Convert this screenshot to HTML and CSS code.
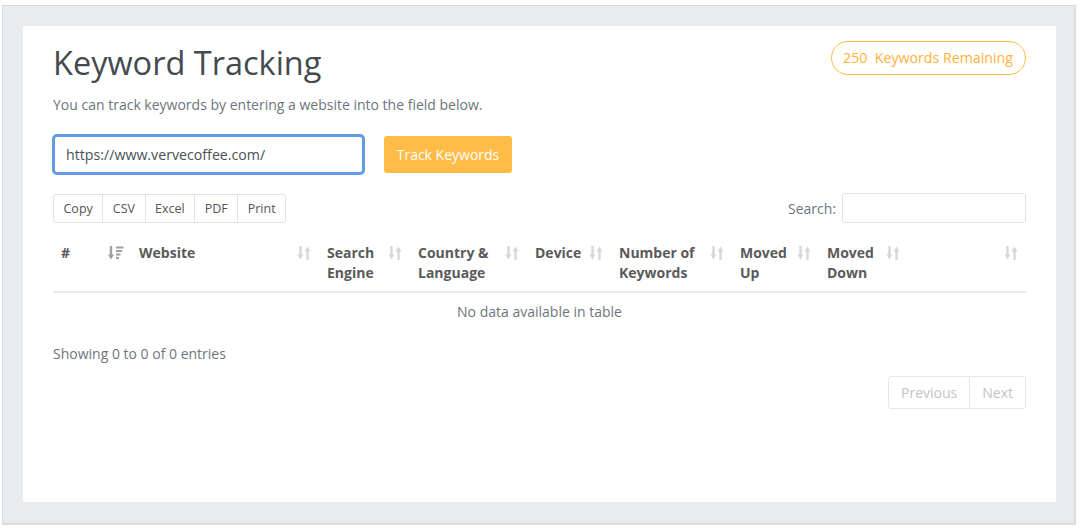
FILE: index.html
```html
<!DOCTYPE html>
<html lang="en">
<head>
<meta charset="utf-8">
<title>Keyword Tracking</title>
<link rel="stylesheet" href="styles.css">
</head>
<body>
<div class="frame">
  <div class="card">
    <div class="head">
      <div class="head-text">
        <h1 class="title">Keyword Tracking</h1>
        <p class="subtitle">You can track keywords by entering a website into the field below.</p>
      </div>
      <div class="badge">250&nbsp; Keywords Remaining</div>
    </div>

    <div class="form-row">
      <input class="url-input" type="text" value="https://www.vervecoffee.com/">
      <button class="track-btn">Track Keywords</button>
    </div>

    <div class="toolbar">
      <div class="btn-group">
        <span class="tb-btn">Copy</span><span class="tb-btn">CSV</span><span class="tb-btn">Excel</span><span class="tb-btn">PDF</span><span class="tb-btn">Print</span>
      </div>
      <label class="search">Search: <span class="search-input"></span></label>
    </div>

    <table class="grid">
      <colgroup>
        <col class="c1"><col class="c2"><col class="c3"><col class="c4"><col class="c5"><col class="c6"><col class="c7"><col class="c8"><col class="c9">
      </colgroup>
      <thead>
        <tr>
          <th><div class="th-in"><span>#</span>
            <svg class="sort active" viewBox="0 0 16 14"><path d="M3 0v10" stroke="#a0a0a0" stroke-width="2.4"/><path d="M0 8.5l3 5 3-5z" fill="#a0a0a0"/><rect x="8" y="0.5" width="7.5" height="2" fill="#a0a0a0"/><rect x="8" y="4" width="6" height="2" fill="#a0a0a0"/><rect x="8" y="7.5" width="4.5" height="2" fill="#a0a0a0"/><rect x="8" y="11" width="3" height="2" fill="#a0a0a0"/></svg></div></th>
          <th><div class="th-in"><span>Website</span><svg class="sort" viewBox="0 0 14 14"><path d="M3.5 0v10" stroke="#d6d6d6" stroke-width="2.3"/><path d="M0.6 8.5l2.9 5 2.9-5z" fill="#d6d6d6"/><path d="M10.5 14V4" stroke="#d6d6d6" stroke-width="2.3"/><path d="M7.6 5.5l2.9-5 2.9 5z" fill="#d6d6d6"/></svg></div></th>
          <th><div class="th-in"><span>Search<br>Engine</span><svg class="sort" viewBox="0 0 14 14"><path d="M3.5 0v10" stroke="#d6d6d6" stroke-width="2.3"/><path d="M0.6 8.5l2.9 5 2.9-5z" fill="#d6d6d6"/><path d="M10.5 14V4" stroke="#d6d6d6" stroke-width="2.3"/><path d="M7.6 5.5l2.9-5 2.9 5z" fill="#d6d6d6"/></svg></div></th>
          <th><div class="th-in"><span>Country &amp;<br>Language</span><svg class="sort" viewBox="0 0 14 14"><path d="M3.5 0v10" stroke="#d6d6d6" stroke-width="2.3"/><path d="M0.6 8.5l2.9 5 2.9-5z" fill="#d6d6d6"/><path d="M10.5 14V4" stroke="#d6d6d6" stroke-width="2.3"/><path d="M7.6 5.5l2.9-5 2.9 5z" fill="#d6d6d6"/></svg></div></th>
          <th><div class="th-in"><span>Device</span><svg class="sort" viewBox="0 0 14 14"><path d="M3.5 0v10" stroke="#d6d6d6" stroke-width="2.3"/><path d="M0.6 8.5l2.9 5 2.9-5z" fill="#d6d6d6"/><path d="M10.5 14V4" stroke="#d6d6d6" stroke-width="2.3"/><path d="M7.6 5.5l2.9-5 2.9 5z" fill="#d6d6d6"/></svg></div></th>
          <th><div class="th-in"><span>Number of<br>Keywords</span><svg class="sort" viewBox="0 0 14 14"><path d="M3.5 0v10" stroke="#d6d6d6" stroke-width="2.3"/><path d="M0.6 8.5l2.9 5 2.9-5z" fill="#d6d6d6"/><path d="M10.5 14V4" stroke="#d6d6d6" stroke-width="2.3"/><path d="M7.6 5.5l2.9-5 2.9 5z" fill="#d6d6d6"/></svg></div></th>
          <th><div class="th-in"><span>Moved<br>Up</span><svg class="sort" viewBox="0 0 14 14"><path d="M3.5 0v10" stroke="#d6d6d6" stroke-width="2.3"/><path d="M0.6 8.5l2.9 5 2.9-5z" fill="#d6d6d6"/><path d="M10.5 14V4" stroke="#d6d6d6" stroke-width="2.3"/><path d="M7.6 5.5l2.9-5 2.9 5z" fill="#d6d6d6"/></svg></div></th>
          <th><div class="th-in"><span>Moved<br>Down</span><svg class="sort" viewBox="0 0 14 14"><path d="M3.5 0v10" stroke="#d6d6d6" stroke-width="2.3"/><path d="M0.6 8.5l2.9 5 2.9-5z" fill="#d6d6d6"/><path d="M10.5 14V4" stroke="#d6d6d6" stroke-width="2.3"/><path d="M7.6 5.5l2.9-5 2.9 5z" fill="#d6d6d6"/></svg></div></th>
          <th><div class="th-in"><span></span><svg class="sort" viewBox="0 0 14 14"><path d="M3.5 0v10" stroke="#d6d6d6" stroke-width="2.3"/><path d="M0.6 8.5l2.9 5 2.9-5z" fill="#d6d6d6"/><path d="M10.5 14V4" stroke="#d6d6d6" stroke-width="2.3"/><path d="M7.6 5.5l2.9-5 2.9 5z" fill="#d6d6d6"/></svg></div></th>
        </tr>
      </thead>
      <tbody>
        <tr><td colspan="9" class="empty">No data available in table</td></tr>
      </tbody>
    </table>

    <div class="info">Showing 0 to 0 of 0 entries</div>

    <div class="pager">
      <span class="pg">Previous</span><span class="pg">Next</span>
    </div>
  </div>
</div>
</body>
</html>
```
FILE: styles.css
```css
* { box-sizing: border-box; }
html, body { margin: 0; padding: 0; background: #ffffff; }
body {
  font-family: "Open Sans", "Noto Sans", sans-serif;
  color: #555;
}
.frame {
  margin: 5px 0 0 2px;
  width: 1074px;
  height: 520px;
  background: #e9ecef;
  border-style: solid;
  border-color: #dcdcdc;
  border-width: 1px 2px 2px 1px;
  padding: 20px 18px 20px 20px;
}
.card {
  background: #fff;
  height: 476px;
  padding: 15px 30px 0 30px;
}
.head {
  display: flex;
  justify-content: space-between;
  align-items: flex-start;
}
.title {
  margin: 2px 0 0 0;
  font-size: 32.5px;
  font-weight: 400;
  line-height: 40px;
  color: #454a50;
}
.subtitle {
  margin: 12px 0 0 0;
  font-size: 14px;
  line-height: 20px;
  color: #6c757d;
}
.badge {
  border: 1px solid #ffbc47;
  color: #ffb13b;
  border-radius: 17px;
  height: 34px;
  line-height: 32px;
  padding: 0 12px 0 11.5px;
  font-size: 14.2px;
}
.form-row {
  display: flex;
  align-items: center;
  margin-top: 19px;
  margin-left: -1px;
}
.url-input {
  width: 313px;
  height: 41px;
  border: 3px solid #609ce6;
  border-radius: 5px;
  padding: 0 11px;
  font-family: inherit;
  font-size: 14.2px;
  color: #495057;
  outline: none;
}
.track-btn {
  margin-left: 19px;
  width: 128px;
  height: 37px;
  border: 0;
  border-radius: 3px;
  background: #ffbc47;
  color: #fff;
  font-family: inherit;
  font-size: 14px;
}
.toolbar {
  display: flex;
  justify-content: space-between;
  align-items: center;
  margin-top: 18px;
}
.btn-group {
  display: flex;
  border: 1px solid #e2e2e2;
  border-radius: 3px;
  height: 29px;
}
.tb-btn {
  font-size: 12.5px;
  color: #555;
  line-height: 27px;
  padding: 0 9.5px;
  border-left: 1px solid #e2e2e2;
}
.tb-btn:first-child { border-left: 0; }
.search {
  display: flex;
  align-items: center;
  font-size: 14px;
  color: #6c757d;
}
.search-input {
  margin-left: 6px;
  width: 184px;
  height: 30px;
  border: 1px solid #e2e2e2;
  border-radius: 3px;
}
.grid {
  width: 973px;
  margin-top: 13px;
  border-collapse: collapse;
  table-layout: fixed;
}
.c1 { width: 78px; }
.c2 { width: 188px; }
.c3 { width: 91px; }
.c4 { width: 117px; }
.c5 { width: 84px; }
.c6 { width: 121px; }
.c7 { width: 87px; }
.c8 { width: 89px; }
.c9 { width: 118px; }
.grid th {
  text-align: left;
  vertical-align: top;
  padding: 7px 8px 8px 8px;
  border-bottom: 2px solid #e9ecef;
  font-size: 14px;
  font-weight: 700;
  line-height: 20px;
  color: #5a5a5a;
}
.th-in {
  display: flex;
  justify-content: space-between;
  align-items: flex-start;
}
.sort {
  width: 14px;
  height: 14px;
  margin-top: 3px;
  flex: none;
}
.sort.active { width: 16px; margin-right: -1px; }
.empty {
  text-align: center;
  font-size: 14px;
  color: #6c757d;
  padding: 9px 0 9px 0;
  line-height: 20px;
}
.info {
  margin-top: 13px;
  font-size: 14px;
  color: #6c757d;
}
.pager {
  display: flex;
  justify-content: flex-end;
  margin-top: 13px;
}
.pg {
  font-size: 14px;
  color: #c4c4c4;
  border: 1px solid #e6e6e6;
  height: 33px;
  line-height: 31px;
  padding: 0 12px;
}
.pg:first-child { border-radius: 3px 0 0 3px; }
.pg + .pg { border-left: 0; border-radius: 0 3px 3px 0; }
```
